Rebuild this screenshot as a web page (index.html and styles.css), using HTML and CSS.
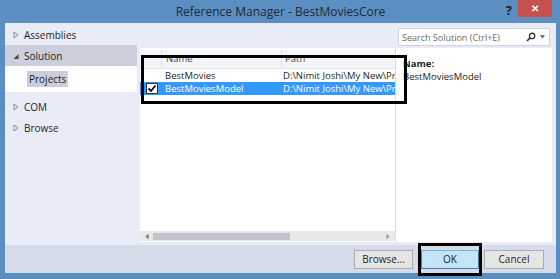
FILE: index.html
```html
<!DOCTYPE html>
<html lang="en">
<head>
    <meta charset="UTF-8" />
    <title>Reference Manager - BestMoviesCore</title>
    <link rel="stylesheet" href="styles.css">
</head>
<body>
    <div class="window">
        <div class="titlebar">
            <span></span>
            <span class="title">Reference Manager - BestMoviesCore</span>
            <div class="controls">
                <span class="help">?</span>
                <span class="close">&#x2715;</span>
            </div>
        </div>

        <div class="client">
            <div class="main">
                <div class="sidebar">
                    <div class="node"><svg class="arrow" viewBox="0 0 6 8"><path d="M1 1 L5 4 L1 7 Z" fill="none" stroke="#8a8a8a" stroke-width="1"/></svg>Assemblies</div>
                    <div class="node open"><svg class="arrow" viewBox="0 0 6 8"><path d="M5.5 2 L5.5 7 L0.5 7 Z" fill="#444"/></svg>Solution</div>
                    <div class="child"><span class="child-label">Projects</span></div>
                    <div class="node"><svg class="arrow" viewBox="0 0 6 8"><path d="M1 1 L5 4 L1 7 Z" fill="none" stroke="#8a8a8a" stroke-width="1"/></svg>COM</div>
                    <div class="node"><svg class="arrow" viewBox="0 0 6 8"><path d="M1 1 L5 4 L1 7 Z" fill="none" stroke="#8a8a8a" stroke-width="1"/></svg>Browse</div>
                </div>

                <div class="content">
                    <div class="topstrip">
                        <div class="search">
                            <span class="search-text">Search Solution (Ctrl+E)</span>
                            <svg class="search-icon" viewBox="0 0 12 12"><circle cx="7.3" cy="4.7" r="3.2" fill="none" stroke="#333" stroke-width="1.6"/><path d="M5 7 L1.2 10.8" stroke="#333" stroke-width="2"/></svg>
                            <svg class="drop" viewBox="0 0 6 4"><path d="M0 0 L6 0 L3 3.5 Z" fill="#555"/></svg>
                        </div>
                    </div>
                    <div class="panes">
                        <div class="list">
                            <div class="row head">
                                <span class="c-check"></span>
                                <span class="c-name">Name</span>
                                <span class="c-path">Path</span>
                            </div>
                            <div class="row">
                                <span class="c-check"></span>
                                <span class="c-name">BestMovies</span>
                                <span class="c-path">D:\Nimit Joshi\My New\Projects</span>
                            </div>
                            <div class="row selected">
                                <span class="c-check"><span class="box"><svg viewBox="0 0 10 9"><path d="M1.5 4.5 L4 7 L8.5 1.5" fill="none" stroke="#000" stroke-width="1.8"/></svg></span></span>
                                <span class="c-name">BestMoviesModel</span>
                                <span class="c-path">D:\Nimit Joshi\My New\Projects</span>
                            </div>
                            <div class="list-fill"></div>
                            <div class="hscroll">
                                <svg class="sarrow" viewBox="0 0 5 8"><path d="M4.5 0.5 L0.5 4 L4.5 7.5 Z" fill="#777"/></svg>
                                <div class="track"><div class="thumb"></div></div>
                                <svg class="sarrow" viewBox="0 0 5 8"><path d="M0.5 0.5 L4.5 4 L0.5 7.5 Z" fill="#999"/></svg>
                            </div>
                        </div>
                        <div class="details">
                            <div class="d-label">Name:</div>
                            <div class="d-value">BestMoviesModel</div>
                        </div>
                    </div>
                </div>
            </div>

            <div class="buttons">
                <button class="btn browse">Browse...</button>
                <span class="mark-ok"><button class="btn ok">OK</button></span>
                <button class="btn cancel">Cancel</button>
            </div>
        </div>

        <div class="mark-list"></div>
    </div>
</body>
</html>
```

FILE: styles.css
```css
body {
    margin: 0;
    font-family: "Open Sans", "Noto Sans", sans-serif;
    font-size: 9.5px;
    color: #1e1e1e;
}
.window {
    position: relative;
    width: 560px;
    height: 279px;
    box-sizing: border-box;
    padding: 0 4px 6px 5px;
    background: #5b8fc1;
    display: flex;
    flex-direction: column;
}
.titlebar {
    height: 23px;
    display: grid;
    grid-template-columns: 1fr auto 1fr;
    align-items: start;
}
.title {
    font-size: 12px;
    line-height: 23px;
    color: #1d2a38;
}
.controls {
    display: flex;
    justify-content: flex-end;
    align-items: flex-start;
}
.help {
    font-size: 13px;
    font-weight: bold;
    color: #1a1a1a;
    line-height: 20px;
    margin-right: 6px;
}
.close {
    width: 34px;
    height: 17px;
    margin-right: 4px;
    background: #c75050;
    color: #fff;
    font-size: 10px;
    font-weight: bold;
    text-align: center;
    line-height: 17px;
}
.client {
    flex: 1;
    background: #e9ecf6;
    display: flex;
    flex-direction: column;
}
.main {
    flex: 1;
    display: flex;
    padding-bottom: 3px;
}
.sidebar {
    width: 135px;
    padding-top: 1px;
}
.node {
    height: 21px;
    margin-right: 3px;
    display: flex;
    align-items: center;
    font-size: 10px;
    color: #1e1e1e;
}
.arrow {
    width: 6px;
    height: 8px;
    margin: 0 5px 0 8px;
}
.node.open {
    background: #cccedb;
}
.child {
    height: 26px;
    margin-bottom: 4px;
    padding-left: 22px;
    display: flex;
    align-items: center;
    background: #fff;
    margin-right: 3px;
}
.child-label {
    font-size: 10px;
    background: #cccedb;
    padding: 1px 2px;
}
.node:nth-child(4) {
    margin-top: 1px;
}
.content {
    flex: 1;
    display: flex;
    flex-direction: column;
}
.topstrip {
    height: 25px;
    display: flex;
    justify-content: flex-end;
}
.search {
    width: 150px;
    height: 16px;
    margin: 5px 6px 0 0;
    background: #fff;
    border: 1px solid #cfd3de;
    display: flex;
    align-items: center;
}
.search-text {
    flex: 1;
    color: #6d6d6d;
    font-size: 9px;
    padding-left: 3px;
}
.search-icon {
    width: 10px;
    height: 10px;
    margin-right: 4px;
}
.drop {
    width: 5px;
    height: 4px;
    margin-right: 4px;
}
.panes {
    flex: 1;
    display: flex;
    margin-right: 4px;
}
.list {
    width: 255px;
    background: #fff;
    border-right: 1px solid #dcdcdc;
    display: flex;
    flex-direction: column;
    overflow: hidden;
}
.row {
    display: flex;
    height: 13px;
    line-height: 13px;
    white-space: nowrap;
}
.row.head {
    height: 18px;
    line-height: 18px;
    margin-top: 2px;
    background: #f4f5f8;
    border-bottom: 1px solid #e3e3e6;
    color: #444;
}
.row.head span {
    border-right: 1px solid #e0e0e4;
}
.c-check {
    width: 21px;
    flex: none;
    display: flex;
    align-items: center;
    justify-content: flex-end;
}
.c-name {
    width: 115px;
    flex: none;
    padding-left: 4px;
}
.c-path {
    flex: 1;
    padding-left: 3px;
    overflow: hidden;
}
.row.head .c-path {
    border-right: none;
}
.row.selected {
    background: #3399ff;
    color: #fff;
}
.box {
    width: 10px;
    height: 9px;
    background: #fff;
    border: 1px solid #333;
    display: flex;
    margin-right: 3px;
}
.box svg {
    width: 10px;
    height: 9px;
}
.list-fill {
    flex: 1;
}
.hscroll {
    height: 10px;
    margin-bottom: 1px;
    background: #e8e8ec;
    display: flex;
    align-items: center;
    padding: 0 5px;
    gap: 4px;
}
.sarrow {
    width: 4px;
    height: 7px;
}
.track {
    flex: 1;
    height: 7px;
}
.thumb {
    width: 137px;
    height: 7px;
    background: #c2c3c9;
}
.details {
    flex: 1;
    background: #fff;
    padding: 9px 0 0 7px;
    font-size: 9.5px;
    line-height: 13px;
}
.d-label {
    font-weight: bold;
    color: #1e1e1e;
}
.buttons {
    height: 28px;
    background: #d6dbe9;
    display: flex;
    justify-content: flex-end;
    align-items: center;
    padding-right: 12px;
}
.btn {
    height: 19px;
    font-family: "Open Sans", "Noto Sans", sans-serif;
    font-size: 10px;
    color: #1e1e1e;
    background: #e5e5e5;
    border: 1px solid #acacac;
    padding: 0;
}
.browse {
    width: 59px;
}
.mark-ok {
    border: 3px solid #000;
    padding: 4px 0;
    margin: 0 2px 0 5px;
    display: flex;
}
.ok {
    width: 58px;
    background: #c4e5f6;
    border-color: #3c7fb1;
    border-top: 1px solid #6fb4e8;
}
.cancel {
    width: 60px;
}
.mark-list {
    position: absolute;
    left: 141px;
    top: 55px;
    width: 260px;
    height: 43px;
    border: 3px solid #000;
}
```
